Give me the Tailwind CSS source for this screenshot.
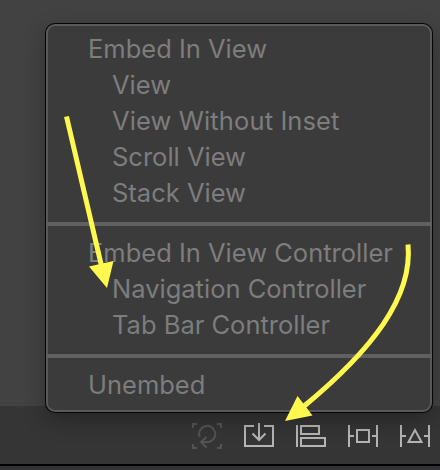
<!DOCTYPE html>
<html lang="en">
<head>
<meta charset="utf-8">
<title>Embed In menu</title>
<script src="https://cdn.jsdelivr.net/npm/@tailwindcss/browser@4"></script>
</head>
<body class="relative flex h-[470px] w-[440px] flex-col overflow-hidden bg-[#424242] font-['Inter','Liberation_Sans',sans-serif]">
  <main class="h-[406px] shrink-0 bg-[#424242]"></main>
  <footer class="flex h-[60px] shrink-0 items-start justify-end border-b-2 border-black bg-[#353535]">
    <svg class="h-[58px] w-[260px]" viewBox="180 406 260 58" fill="none" stroke="#b5b5b5" stroke-width="2">
      <g stroke="#545454">
        <path d="M193 428v-4h4M217 424h4v4M221 444v4h-4M197 448h-4v-4"/>
        <path d="M199.700 437A8.100 8.100 0 1 1 208.500 442L201 442M206.500 437L201 442l5.500 5.500"/>
      </g>
      <path d="M254 426h-9v20h28v-20h-9M259 423v17M252.500 433.500l6.500 6.500 6.500-6.500"/>
      <path d="M297 425v22M301 426h18v8h-18zM301 438h24v8h-24z"/>
      <path d="M349 425v22M377 425v22M349 436h5M372 436h5M357 430h12v12h-12z"/>
      <path d="M401 425v22M429 425v22M401 436h5M424 436h5M415 430l-6.500 12h13z"/>
    </svg>
  </footer>
  <div class="h-1 shrink-0 bg-[#323137]"></div>

  <section class="absolute left-[46px] top-6 flex h-[388px] w-[386px] flex-col rounded-[9px] border-2 border-[#595959] bg-[#3b3b3b] pt-[5px] text-[25.5px] leading-9 whitespace-nowrap text-[#7d7d7d] shadow-[0_0_0_1px_#050505,0_8px_22px_rgba(0,0,0,0.3)]">
    <div class="pl-10">Embed In View</div>
    <div class="pl-16">View</div>
    <div class="pl-16 tracking-[0.12px]">View Without Inset</div>
    <div class="pl-16">Scroll View</div>
    <div class="pl-16">Stack View</div>
    <hr class="-mx-0.5 mt-[11px] mb-[9px] h-1 shrink-0 border-0 bg-[#606060]">
    <div class="pl-10">Embed In View Controller</div>
    <div class="pl-16">Navigation Controller</div>
    <div class="pl-16">Tab Bar Controller</div>
    <hr class="-mx-0.5 mt-[11px] mb-[9px] h-1 shrink-0 border-0 bg-[#606060]">
    <div class="pl-10">Unembed</div>
  </section>

  <svg class="absolute inset-0 h-[470px] w-[440px]" viewBox="0 0 440 470" fill="none">
    <path d="M66.500 116.500L101.500 266" stroke="#fff94f" stroke-width="5"/>
    <path d="M89 266.500L113.500 261 107 288z" fill="#fff94f"/>
    <path d="M408 244.500C413 297 372 350 303 407" stroke="#fff94f" stroke-width="5"/>
    <path d="M297.500 396L312.500 415.500 285 421z" fill="#fff94f"/>
  </svg>
</body>
</html>
